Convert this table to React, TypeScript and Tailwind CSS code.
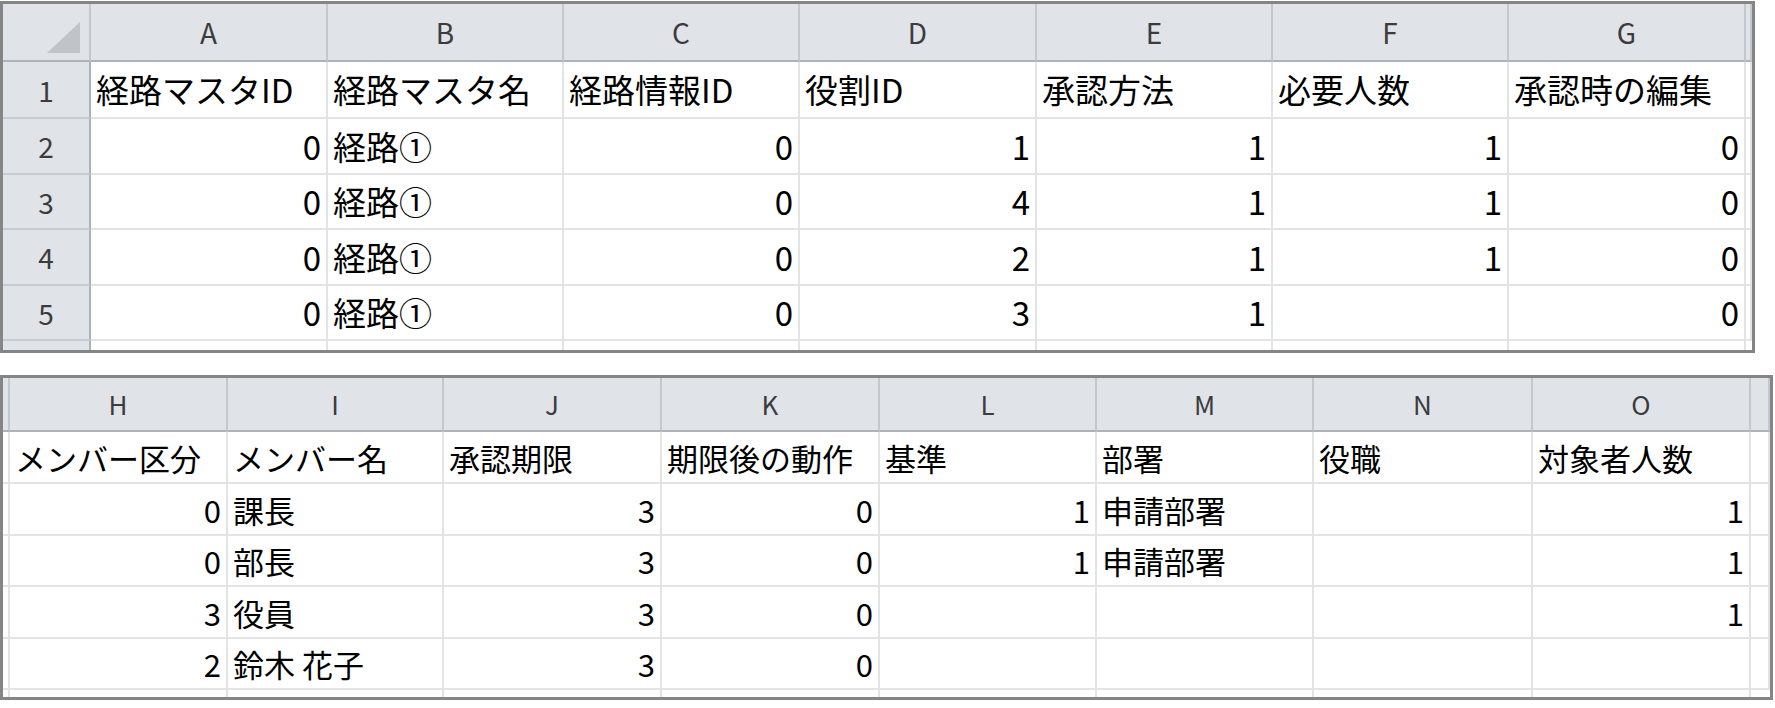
import React from "react";

type V = string | number;

const topHeaders = ["経路マスタID", "経路マスタ名", "経路情報ID", "役割ID", "承認方法", "必要人数", "承認時の編集"];
const topRows: V[][] = [
  [0, "経路①", 0, 1, 1, 1, 0],
  [0, "経路①", 0, 4, 1, 1, 0],
  [0, "経路①", 0, 2, 1, 1, 0],
  [0, "経路①", 0, 3, 1, "", 0],
];

const botHeaders = ["メンバー区分", "メンバー名", "承認期限", "期限後の動作", "基準", "部署", "役職", "対象者人数"];
const botRows: V[][] = [
  [0, "課長", 3, 0, 1, "申請部署", "", 1],
  [0, "部長", 3, 0, 1, "申請部署", "", 1],
  [3, "役員", 3, 0, "", "", "", 1],
  [2, "鈴木 花子", 3, 0, "", "", "", ""],
];

const hdrCell =
  "bg-[#e0e3e8] border-r-2 border-b-2 border-r-[#c3c8ce] border-b-[#aeb3ba] flex items-center justify-center text-[#3c3c3c]";
const dataCell = "bg-white border-r-2 border-b-2 border-[#e2e3e4] flex items-center overflow-hidden whitespace-nowrap";

function DataCell({ v }: { v: V }) {
  const isNum = typeof v === "number";
  return (
    <div className={`${dataCell} ${isNum ? "justify-end pr-[5px]" : "justify-start pl-[5px]"}`}>
      {v === "" ? null : String(v)}
    </div>
  );
}

const rowNum =
  "bg-[#e0e3e8] border-r-2 border-b-2 border-r-[#aeb3ba] border-b-[#c6cbd1] flex items-center justify-center text-[28px] text-[#3c3c3c]";

function TopSheet() {
  const letters = ["A", "B", "C", "D", "E", "F", "G"];
  return (
    <div className="mt-px w-[1755px] border-[3px] border-[#858585] bg-white">
      <div className="grid grid-cols-[88px_237px_236px_236px_237px_236px_236px_237px_6px] grid-rows-[58px_57px_56px_55px_56px_55px_9px] text-[33px] leading-none text-black">
        <div className={`${hdrCell} items-end justify-end pr-[9px] pb-[7px]`}>
          <svg width="33" height="31" viewBox="0 0 33 31">
            <polygon points="33,0 33,31 0,31" fill="#c0c4c9" />
          </svg>
        </div>
        {letters.map((l) => (
          <div key={l} className={`${hdrCell} text-[28px]`}>
            {l}
          </div>
        ))}
        <div className={`${hdrCell} border-r-0`} />
        <div className={rowNum}>1</div>
        {topHeaders.map((h) => (
          <DataCell key={h} v={h} />
        ))}
        <div className={`${dataCell} border-r-0`} />
        {topRows.map((r, i) => (
          <React.Fragment key={i}>
            <div className={rowNum}>{i + 2}</div>
            {r.map((v, j) => (
              <DataCell key={j} v={v} />
            ))}
            <div className={`${dataCell} border-r-0`} />
          </React.Fragment>
        ))}
        <div className="bg-[#e0e3e8] border-r-2 border-r-[#aeb3ba]" />
        {letters.map((l) => (
          <div key={l} className="bg-white border-r-2 border-[#e2e3e4]" />
        ))}
        <div className="bg-white" />
      </div>
    </div>
  );
}

function BottomSheet() {
  const letters = ["H", "I", "J", "K", "L", "M", "N", "O"];
  return (
    <div className="mt-[22px] w-[1773px] border-[3px] border-[#858585] bg-white">
      <div className="grid grid-cols-[7px_218px_216px_218px_218px_217px_217px_219px_218px_19px] grid-rows-[54px_52px_52px_51px_52px_51px_7px] text-[31px] leading-none text-black">
        <div className={`${hdrCell}`} />
        {letters.map((l) => (
          <div key={l} className={`${hdrCell} text-[26px]`}>
            {l}
          </div>
        ))}
        <div className={`${hdrCell} border-r-0`} />
        <div className={`${dataCell}`} />
        {botHeaders.map((h) => (
          <DataCell key={h} v={h} />
        ))}
        <div className={`${dataCell} border-r-0`} />
        {botRows.map((r, i) => (
          <React.Fragment key={i}>
            <div className={`${dataCell}`} />
            {r.map((v, j) => (
              <DataCell key={j} v={v} />
            ))}
            <div className={`${dataCell} border-r-0`} />
          </React.Fragment>
        ))}
        <div className="bg-white border-r-2 border-[#e2e3e4]" />
        {letters.map((l) => (
          <div key={l} className="bg-white border-r-2 border-[#e2e3e4]" />
        ))}
        <div className="bg-white" />
      </div>
    </div>
  );
}

export default function App() {
  return (
    <div className="w-[1775px] h-[708px] bg-white overflow-hidden font-['Noto_Sans_CJK_JP',sans-serif]">
      <TopSheet />
      <BottomSheet />
    </div>
  );
}
